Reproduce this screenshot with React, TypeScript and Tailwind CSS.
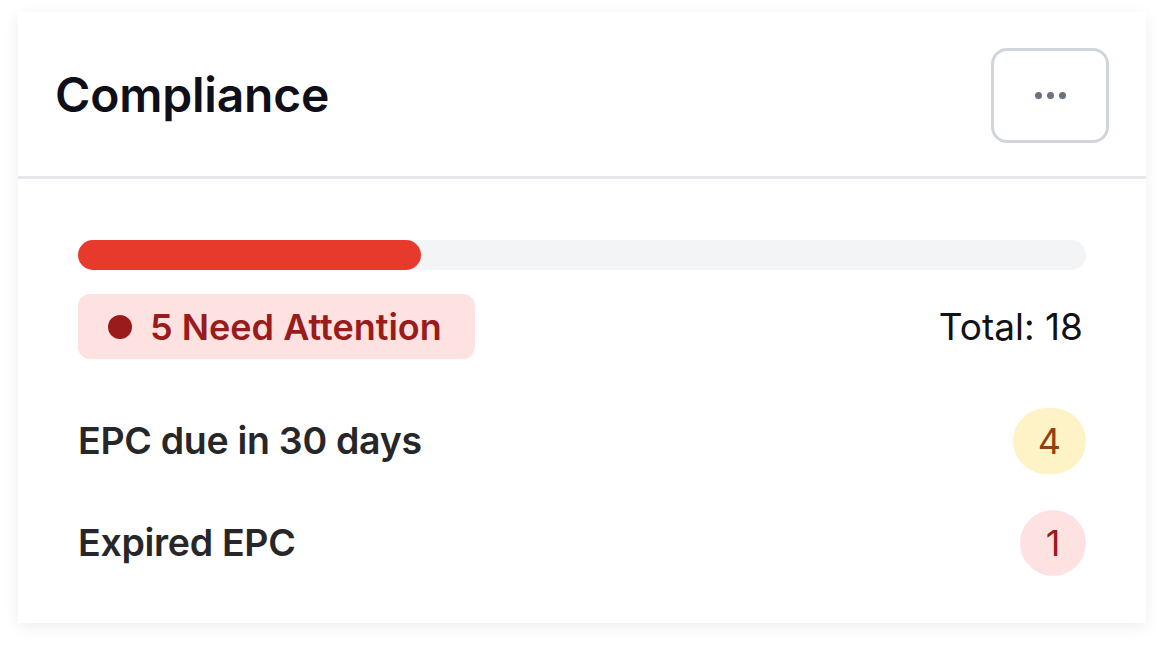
export default function App() {
  const total = 18
  const needAttention = 5

  const items = [
    { label: "EPC due in 30 days", count: 4, tone: "amber" },
    { label: "Expired EPC", count: 1, tone: "red" },
  ]

  return (
    <div className="min-h-screen bg-white pl-[18px] pt-[12px]" style={{ fontFamily: "Inter, 'Noto Sans', sans-serif" }}>
      <div className="w-[1128px] bg-white shadow-[0_4px_14px_rgba(0,0,0,0.07)]">
        {/* header */}
        <div className="flex items-center justify-between border-b-[3px] border-[#e5e7eb] pl-[37px] pr-[37px] pt-[2px] h-[167px]">
          <h1 className="text-[48px] font-semibold text-[#0f0f1a] tracking-[-0.2px]">Compliance</h1>
          <button className="flex h-[95px] w-[118px] items-center justify-center gap-[5px] rounded-[16px] border-[3px] border-[#d1d5db] bg-white">
            <span className="h-[7px] w-[7px] rounded-full bg-[#6b7280]" />
            <span className="h-[7px] w-[7px] rounded-full bg-[#6b7280]" />
            <span className="h-[7px] w-[7px] rounded-full bg-[#6b7280]" />
          </button>
        </div>

        {/* body */}
        <div className="px-[60px] pt-[61px] pb-[47px]">
          <div className="h-[30px] w-full rounded-full bg-[#f3f4f6]">
            <div className="h-full rounded-full bg-[#e8392d]" style={{ width: "34%" }} />
          </div>

          <div className="mt-[24px] flex items-center justify-between">
            <div className="flex h-[65px] items-center gap-[18px] rounded-[12px] bg-[#fee2e2] pl-[30px] pr-[33px]">
              <span className="h-[24px] w-[24px] rounded-full bg-[#991b1b]" />
              <span className="text-[36px] font-semibold text-[#991b1b]">{needAttention} Need Attention</span>
            </div>
            <span className="text-[37px] text-[#111118] pr-[3px]">Total: {total}</span>
          </div>

          <div className="mt-[49px] flex flex-col gap-[36px]">
            {items.map((item) => (
              <div key={item.label} className="flex items-center justify-between">
                <span className="text-[37.5px] font-semibold text-[#27272a] tracking-[-0.3px]">{item.label}</span>
                <span
                  className={
                    item.tone === "amber"
                      ? "flex h-[66px] min-w-[66px] items-center justify-center rounded-full px-[25px] text-[36px] bg-[#fef3c7] text-[#92400e]"
                      : "flex h-[66px] min-w-[66px] items-center justify-center rounded-full px-[25px] text-[36px] bg-[#fee2e2] text-[#991b1b]"
                  }
                >
                  {item.count}
                </span>
              </div>
            ))}
          </div>
        </div>
      </div>
    </div>
  )
}
